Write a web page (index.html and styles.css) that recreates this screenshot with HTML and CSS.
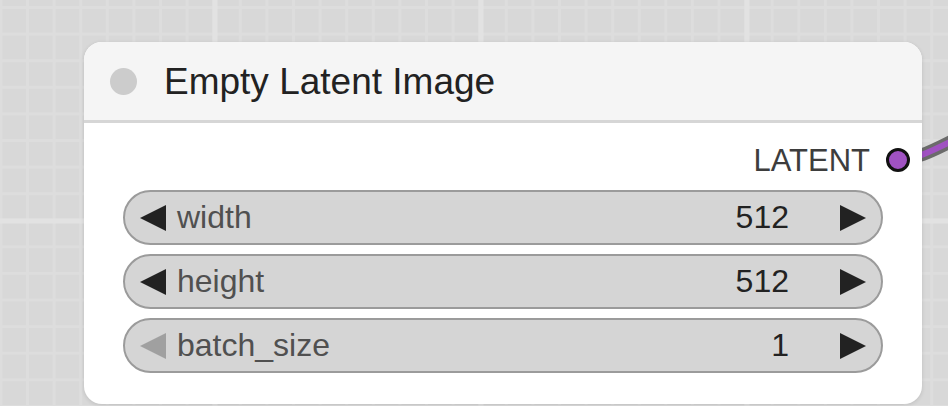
FILE: index.html
```html
<!DOCTYPE html>
<html lang="en">
<head>
	<meta charset="UTF-8">
	<title>Empty Latent Image</title>
	<link rel="stylesheet" href="styles.css">
</head>
<body>
	<div class="canvas">
		<!-- link from LATENT output, drawn under the node -->
		<svg class="link" width="948" height="406" viewBox="0 0 948 406">
			<path class="link_outline" d="M898 159 C 916 159, 930 152, 948 143 S 968 131, 980 124"/>
			<path class="link_core" d="M898 159 C 916 159, 930 152, 948 143 S 968 131, 980 124"/>
		</svg>

		<div class="node">
			<div class="node_title">
				<span class="title_dot"></span>
				<span class="title_text">Empty Latent Image</span>
			</div>
			<div class="node_body">
				<div class="slot_row">
					<span class="slot_name">LATENT</span>
					<span class="slot_dot"></span>
				</div>
				<ul class="widgets">
					<li class="widget">
						<span class="arrow arrow_left"></span>
						<span class="w_label">width</span>
						<span class="w_value">512</span>
						<span class="arrow arrow_right"></span>
					</li>
					<li class="widget">
						<span class="arrow arrow_left"></span>
						<span class="w_label">height</span>
						<span class="w_value">512</span>
						<span class="arrow arrow_right"></span>
					</li>
					<li class="widget">
						<span class="arrow arrow_left disabled"></span>
						<span class="w_label">batch_size</span>
						<span class="w_value">1</span>
						<span class="arrow arrow_right"></span>
					</li>
				</ul>
			</div>
		</div>
	</div>
</body>
</html>
```

FILE: styles.css
```css
*{
	margin:0;
	padding:0;
	list-style:none;
	box-sizing:border-box;
}
html,body{
	width:948px;
	height:406px;
	overflow:hidden;
}
body{
	font-family:"Liberation Sans",Arial,sans-serif;
	background:#d8d8d8;
}
.canvas{
	position:relative;
	width:948px;
	height:406px;
	background-color:#d8d8d8;
	background-image:
		linear-gradient(to right,#e2e2e2 5px,transparent 5px),
		linear-gradient(to bottom,#e2e2e2 5px,transparent 5px),
		linear-gradient(to right,#dddddd 3px,transparent 3px),
		linear-gradient(to bottom,#dddddd 3px,transparent 3px);
	background-size:266px 100%,100% 266px,26.6px 100%,100% 26.6px;
	background-position:212.5px 0,0 218.5px,-0.5px 0,0 6px;
}
.link{
	position:absolute;
	left:0;
	top:0;
}
.link path{
	fill:none;
	stroke-linecap:round;
}
.link_outline{
	stroke:#6b6b6b;
	stroke-width:13;
}
.link_core{
	stroke:#a052c2;
	stroke-width:6;
}

/* node */
.node{
	position:absolute;
	left:84px;
	top:42px;
	width:838px;
	background:#fff;
	border-radius:18px;
	box-shadow:0 1px 4px rgba(0,0,0,0.12);
	overflow:hidden;
}
.node_title{
	height:81px;
	display:flex;
	align-items:center;
	padding-left:26px;
	background:#f5f5f5;
	border-bottom:3px solid #d6d6d6;
}
.title_dot{
	width:27px;
	height:27px;
	border-radius:50%;
	background:#cccccc;
	margin-right:27px;
}
.title_text{
	font-size:37px;
	color:#222;
	line-height:1;
}
.node_body{
	padding:20px 39px 31px;
}
.slot_row{
	height:36px;
	display:flex;
	align-items:center;
	justify-content:flex-end;
	margin-right:-27px;
	margin-bottom:11px;
}
.slot_name{
	font-size:31px;
	color:#3d3d3d;
	margin-right:16px;
}
.slot_dot{
	width:24px;
	height:24px;
	border-radius:50%;
	background:#a052c2;
	border:3px solid #111;
	margin-top:-2px;
}
.widgets{
	display:flex;
	flex-direction:column;
	gap:9px;
}
.widget{
	height:55px;
	display:flex;
	align-items:center;
	padding:0 15px;
	background:#d5d5d5;
	border:2px solid #9b9b9b;
	border-radius:28px;
	font-size:32px;
}
.arrow{
	width:0;
	height:0;
	border-top:13px solid transparent;
	border-bottom:13px solid transparent;
}
.arrow_left{
	border-right:26px solid #222;
	margin-right:11px;
}
.arrow_left.disabled{
	border-right-color:#a0a0a0;
}
.arrow_right{
	border-left:26px solid #222;
	margin-left:51px;
}
.w_label{
	flex:1;
	color:#505050;
}
.w_value{
	color:#222;
}
```
